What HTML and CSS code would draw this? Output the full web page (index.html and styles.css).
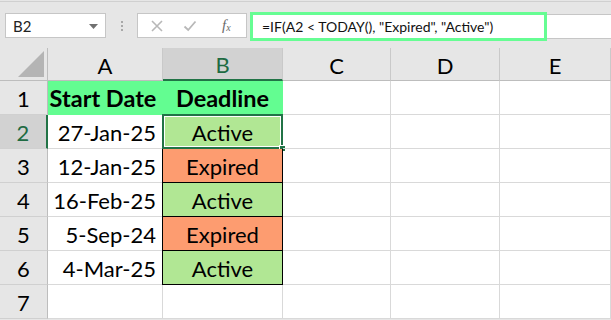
FILE: index.html
```html
<!DOCTYPE html>
<html>
<head>
<meta charset="utf-8">
<link rel="stylesheet" href="styles.css">
</head>
<body>
<div class="app">
  <div class="toolbar">
    <div class="namebox">
      <span class="name">B2</span>
      <svg class="dd" width="9" height="5" viewBox="0 0 9 5"><path d="M0 0H9L4.5 5Z" fill="#707070"/></svg>
    </div>
    <div class="grip"><i></i><i></i><i></i></div>
    <div class="buttons">
      <svg class="btn" width="14" height="14" viewBox="0 0 14 14"><path d="M2 2L12 12M12 2L2 12" stroke="#b8b8b8" stroke-width="1.6" fill="none"/></svg>
      <svg class="btn" width="14" height="14" viewBox="0 0 14 14"><path d="M1.5 7.5L5.2 11L12.5 2.5" stroke="#b8b8b8" stroke-width="1.8" fill="none"/></svg>
      <span class="fx">f<sub>x</sub></span>
    </div>
    <div class="formula">
      <div class="fbox">=IF(A2 &lt; TODAY(), "Expired", "Active")</div>
      <div class="frest"></div>
    </div>
  </div>
  <div class="sheet">
    <div class="corner"><svg width="26" height="26" viewBox="0 0 26 26"><path d="M26 0V26H0Z" fill="#b4b4b4"/></svg></div>
    <div class="ch">A</div>
    <div class="ch sel">B</div>
    <div class="ch">C</div>
    <div class="ch">D</div>
    <div class="ch">E</div>

    <div class="rh">1</div>
    <div class="c head hA">Start Date</div>
    <div class="c head hB">Deadline</div>
    <div class="c"></div><div class="c"></div><div class="c"></div>

    <div class="rh sel">2</div>
    <div class="c date">27-Jan-25</div>
    <div class="c st active cur">Active<span class="handle"></span></div>
    <div class="c"></div><div class="c"></div><div class="c"></div>

    <div class="rh">3</div>
    <div class="c date">12-Jan-25</div>
    <div class="c st expired">Expired</div>
    <div class="c"></div><div class="c"></div><div class="c"></div>

    <div class="rh">4</div>
    <div class="c date">16-Feb-25</div>
    <div class="c st active">Active</div>
    <div class="c"></div><div class="c"></div><div class="c"></div>

    <div class="rh">5</div>
    <div class="c date">5-Sep-24</div>
    <div class="c st expired">Expired</div>
    <div class="c"></div><div class="c"></div><div class="c"></div>

    <div class="rh">6</div>
    <div class="c date">4-Mar-25</div>
    <div class="c st active">Active</div>
    <div class="c"></div><div class="c"></div><div class="c"></div>

    <div class="rh">7</div>
    <div class="c"></div><div class="c"></div><div class="c"></div><div class="c"></div><div class="c"></div>
  </div>
</div>
</body>
</html>
```
FILE: styles.css
```css
* { box-sizing: border-box; }
html, body { margin: 0; padding: 0; }
body {
  width: 611px;
  height: 320px;
  overflow: hidden;
  background: #e6e6e6;
  font-family: Lato, "Open Sans", sans-serif;
  color: #000;
}
.app { width: 611px; height: 320px; overflow: hidden; }

.toolbar {
  height: 47px;
  border-top: 1px solid #d0d0d0;
  margin-top: 1px;
  display: flex;
  align-items: flex-start;
  padding-top: 10px;
}
.namebox {
  margin-left: 5px;
  margin-top: 1px;
  width: 101px;
  height: 25px;
  background: #fff;
  border: 1px solid #c6c6c6;
  display: flex;
  align-items: center;
  justify-content: space-between;
  padding: 0 7px 0 7px;
}
.name { font-size: 15px; color: #222; }
.dd { margin-top: 1px; }
.grip {
  width: 31px;
  height: 27px;
  display: flex;
  flex-direction: column;
  align-items: center;
  justify-content: center;
  gap: 2px;
}
.grip i { display: block; width: 2px; height: 2px; background: #a8a8a8; }
.buttons {
  margin-top: 1px;
  width: 110px;
  height: 25px;
  background: #fff;
  border: 1px solid #c6c6c6;
  display: flex;
  align-items: center;
  padding-left: 12px;
  gap: 19px;
}
.fx {
  font-family: "Liberation Serif", serif;
  font-style: italic;
  font-size: 15px;
  color: #6a6a6a;
  margin-left: 6px;
}
.fx sub { font-size: 10px; vertical-align: -1px; }
.formula {
  flex: 1;
  margin-left: 3px;
  display: flex;
  align-items: center;
  height: 29px;
}
.fbox {
  width: 297px;
  height: 29px;
  border: 3px solid #66fd93;
  background: #fff;
  font-size: 14px;
  line-height: 23px;
  padding-left: 9px;
  color: #111;
  white-space: nowrap;
}
.frest {
  flex: 1;
  height: 25px;
  background: #fff;
  border-top: 1px solid #c6c6c6;
  border-bottom: 1px solid #c6c6c6;
}

.sheet {
  display: grid;
  grid-template-columns: 48px 115px 120px 108px 109px 111px;
  grid-template-rows: 33px repeat(7, 34px);
  background: #fff;
}
.corner {
  background: #e6e6e6;
  border-right: 1px solid #bdbdbd;
  border-bottom: 1px solid #bdbdbd;
  display: flex;
  align-items: flex-end;
  justify-content: flex-end;
  padding: 0 3px 3px 0;
}
.ch {
  background: #e6e6e6;
  border-right: 1px solid #c9c9c9;
  border-bottom: 1px solid #bdbdbd;
  font-size: 22px;
  display: flex;
  align-items: center;
  justify-content: center;
  padding-top: 2px;
}
.ch.sel {
  background: #d2d2d2;
  color: #1e6b42;
  border-bottom: 2px solid #217346;
}
.rh {
  background: #e6e6e6;
  border-right: 1px solid #bdbdbd;
  border-bottom: 1px solid #d0d0d0;
  font-size: 22px;
  display: flex;
  align-items: center;
  justify-content: center;
  padding-top: 1px;
}
.rh.sel {
  background: #d2d2d2;
  color: #1e6b42;
  border-right: 2px solid #217346;
}
.c {
  border-right: 1px solid #d9d9d9;
  border-bottom: 1px solid #d9d9d9;
  font-size: 22px;
  display: flex;
  align-items: center;
  white-space: nowrap;
  position: relative;
  padding-top: 1px;
}
.head {
  background: #63fd91;
  font-weight: 700;
  font-size: 23.5px;
  justify-content: center;
  border-color: #63fd91;
}
.hA { overflow: visible; padding-right: 4px; }
.date { justify-content: flex-end; padding-right: 6px; }
.st {
  justify-content: center;
  border: 1px solid #000;
  border-top: none;
  margin-left: -1px;
}
.active { background: #b1e794; }
.expired { background: #fd9c70; }
.cur {
  border: 2px solid #217346;
  box-shadow: inset 0 0 0 1px #fff;
  margin-top: -1px;
}
.handle {
  position: absolute;
  right: -5px;
  bottom: -5px;
  width: 7px;
  height: 7px;
  background: #217346;
  border: 1px solid #fff;
}
```
